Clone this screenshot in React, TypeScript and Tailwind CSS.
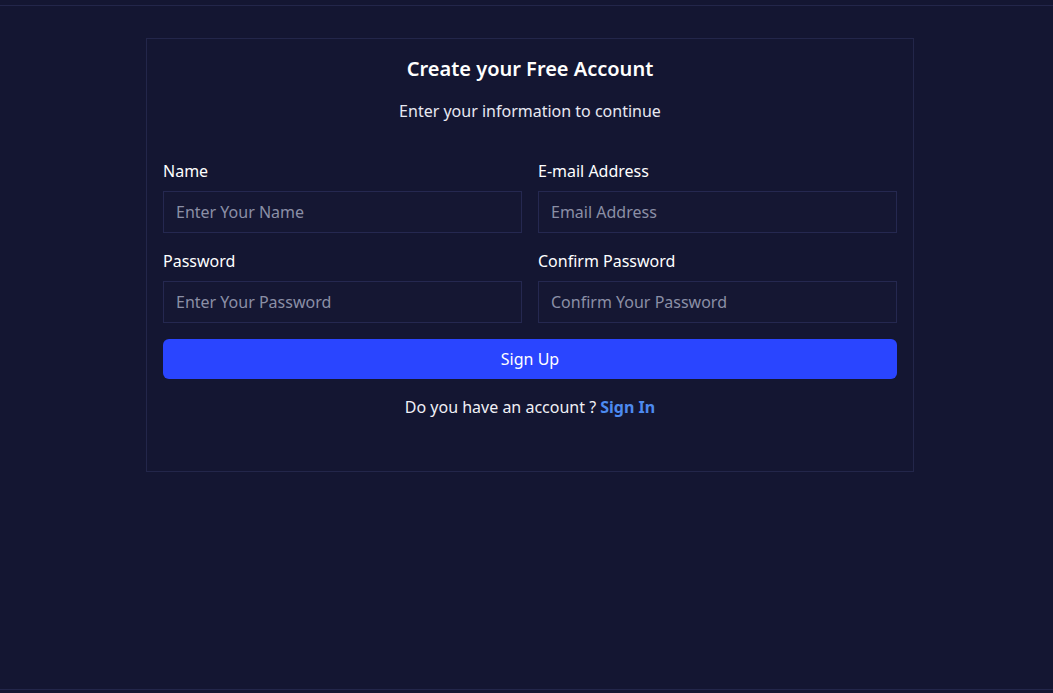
import { useState } from 'react'

function Field({ label, placeholder, type = 'text' }: { label: string; placeholder: string; type?: string }) {
  const [value, setValue] = useState('')
  return (
    <div className="flex flex-col gap-2">
      <label className="text-base leading-6 text-white">{label}</label>
      <input
        type={type}
        value={value}
        onChange={(e) => setValue(e.target.value)}
        placeholder={placeholder}
        className="h-[42px] w-full border border-[#252850] bg-[#151733] px-3 text-base text-white placeholder:text-[#8b8fa6] outline-none"
      />
    </div>
  )
}

export default function App() {
  return (
    <div
      className="flex h-screen flex-col bg-[#141632] text-white"
      style={{ fontFamily: '"Noto Sans", Lato, sans-serif' }}
    >
      <div className="h-[6px] shrink-0 border-b border-[#23264a]" />
      <main className="flex-1 pt-[32px]">
        <div className="ml-[146px] w-[768px] border border-[#23264a] px-4 pt-4 pb-[52px]">
          <h1 className="text-center text-[20px] leading-7 font-semibold text-white">Create your Free Account</h1>
          <p className="mt-4 text-center text-base leading-6 text-[#e8e9f2]">Enter your information to continue</p>

          <form className="mt-9 flex flex-col gap-4" onSubmit={(e) => e.preventDefault()}>
            <div className="grid grid-cols-2 gap-4">
              <Field label="Name" placeholder="Enter Your Name" />
              <Field label="E-mail Address" placeholder="Email Address" type="email" />
            </div>
            <div className="grid grid-cols-2 gap-4">
              <Field label="Password" placeholder="Enter Your Password" type="password" />
              <Field label="Confirm Password" placeholder="Confirm Your Password" type="password" />
            </div>
            <button
              type="submit"
              className="h-10 w-full rounded-md bg-[#2a45ff] text-base text-white hover:bg-[#2238e0]"
            >
              Sign Up
            </button>
            <p className="text-center text-base leading-6 text-[#f0f0f6]">
              Do you have an account ? <a href="#" className="font-bold text-[#4d8af0]">Sign In</a>
            </p>
          </form>
        </div>
      </main>
      <div className="h-[4px] shrink-0 border-t border-[#23264a]" />
    </div>
  )
}
